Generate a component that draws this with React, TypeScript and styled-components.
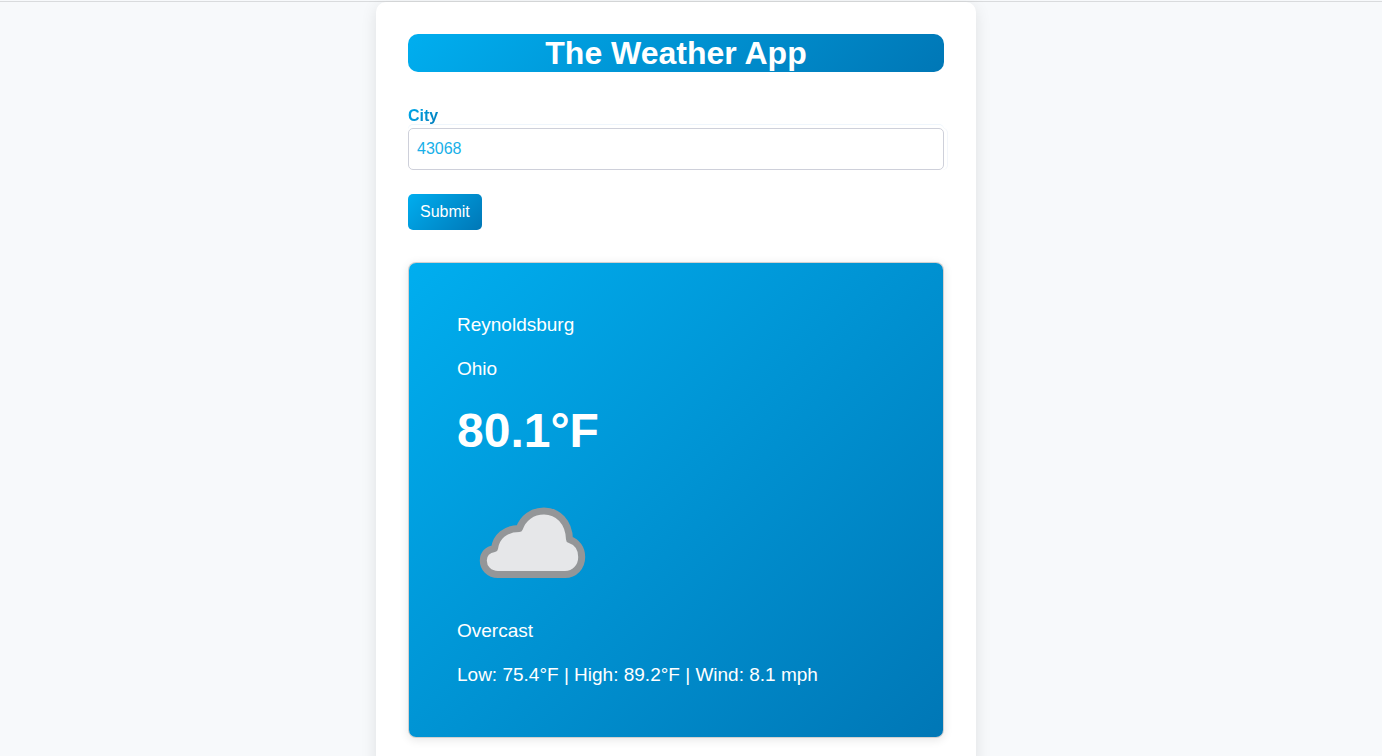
import React, { useState } from "react";
import styled, { createGlobalStyle } from "styled-components";

const gradient = "linear-gradient(135deg, #00aeef, #0077b6)";

const GlobalStyle = createGlobalStyle`
  *, *::before, *::after {
    box-sizing: border-box;
  }

  body {
    margin: 0;
    background: #f7f9fb;
    font-family: Arial, "Liberation Sans", sans-serif;
    font-size: 16px;
    line-height: 24px;
  }
`;

const Page = styled.div`
  margin-top: 1px;
  padding-right: 30px;
  border-top: 1px solid #d9dbdd;
`;

const Container = styled.main`
  max-width: 600px;
  margin: 0 auto;
  padding: 32px;
  border-radius: 10px;
  background: #fff;
  box-shadow: 0 4px 16px rgba(0, 0, 0, 0.1);
`;

const Title = styled.h1`
  margin: 0 0 32px;
  border-radius: 10px;
  background: ${gradient};
  color: #fff;
  font-size: 32px;
  line-height: 38px;
  text-align: center;
`;

const Form = styled.form`
  display: flex;
  flex-direction: column;
  align-items: flex-start;
  margin-bottom: 32px;
`;

const Label = styled.label`
  background: ${gradient};
  background-clip: text;
  -webkit-background-clip: text;
  color: transparent;
  font-weight: 600;
`;

const CityInput = styled.input`
  width: 100%;
  height: 42px;
  margin-bottom: 24px;
  padding: 0 8px;
  border: 1px solid #ced0da;
  border-radius: 5px;
  outline: none;
  background: #fff;
  box-shadow: 0 -3px 0 #fff, 3px 0 0 #fff, 0 -4px 0 #eff6fc, 4px 0 0 #f3f6fb;
  color: #18b0e8;
  font: inherit;
`;

const SubmitButton = styled.button`
  height: 36px;
  padding: 0 12px;
  border: 0;
  border-radius: 5px;
  background: ${gradient};
  color: #fff;
  font: inherit;
  cursor: pointer;
`;

const WeatherCard = styled.section`
  padding: 48px;
  border: 1px solid rgba(0, 0, 0, 0.18);
  border-radius: 8px;
  background: ${gradient} padding-box;
  box-shadow: 0 2px 10px rgba(0, 0, 0, 0.1);
  color: #fff;
`;

const Detail = styled.p`
  margin: 0 0 16px;
  font-size: 19px;
  line-height: 28px;

  &:last-child {
    margin-bottom: 0;
  }
`;

const Temperature = styled.h2`
  margin: 0 0 4px;
  font-size: 48px;
  line-height: 64px;
`;

const Cloud = styled.svg`
  display: block;
  width: 150px;
  height: 150px;
`;

export default function App() {
  const [city, setCity] = useState("43068");

  return (
    <>
      <GlobalStyle />
      <Page>
        <Container>
          <Title>The Weather App</Title>
          <Form onSubmit={(event) => event.preventDefault()}>
            <Label htmlFor="city">City</Label>
            <CityInput
              id="city"
              type="text"
              value={city}
              onChange={(event) => setCity(event.target.value)}
            />
            <SubmitButton type="submit">Submit</SubmitButton>
          </Form>
          <WeatherCard>
            <Detail>Reynoldsburg</Detail>
            <Detail>Ohio</Detail>
            <Temperature>80.1°F</Temperature>
            <Cloud viewBox="0 0 150 150" role="img" aria-label="Overcast">
              <path
                d="M41 107.500C32 107.500 26.300 101 26.300 93.500C26.300 87 30.500 82.500 37.500 81.500C39 70 48 61.500 62.300 61.500C66 51 75 44 87 44C101 44 112 55 112.500 72.500C120 75 124.700 81.500 124.700 90C124.700 100 117.500 107.500 108 107.500Z"
                fill="#e6e7e9"
                stroke="#949698"
                strokeWidth="7"
                strokeLinejoin="round"
              />
            </Cloud>
            <Detail>Overcast</Detail>
            <Detail>Low: 75.4°F | High: 89.2°F | Wind: 8.1 mph</Detail>
          </WeatherCard>
        </Container>
      </Page>
    </>
  );
}
